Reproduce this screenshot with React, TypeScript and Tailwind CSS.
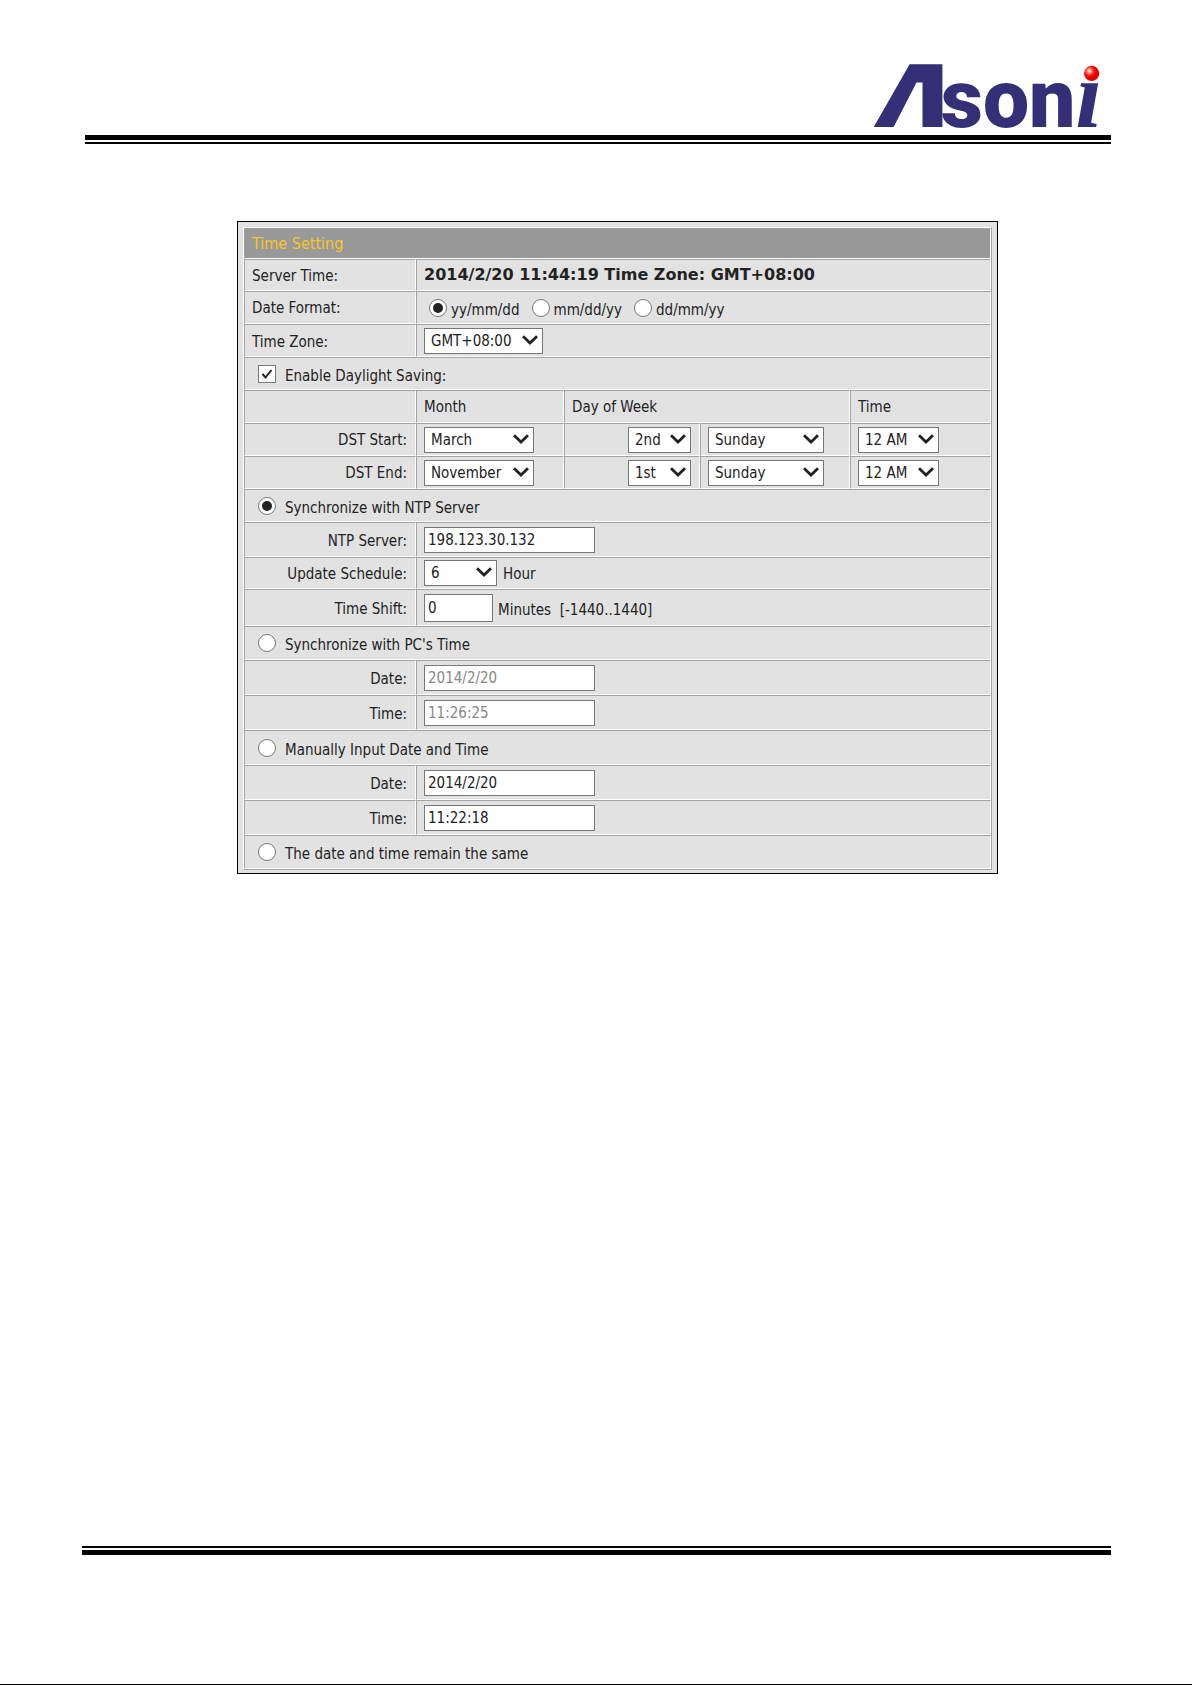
import type { ReactNode } from "react";

// ─── Types ────────────────────────────────────────────────────────────────────

interface SelectBoxProps {
  label: string;
  value: string;
  options: string[];
  className: string;
}

interface TextBoxProps {
  id: string;
  value: string;
  className?: string;
  disabled?: boolean;
}

interface ModeRowProps {
  label: string;
  height: string;
  defaultChecked?: boolean;
}

interface FieldRowProps {
  label: string;
  htmlFor: string;
  height?: string;
  children: ReactNode;
}

// ─── Constants ────────────────────────────────────────────────────────────────

const CELL =
  "border border-t-[#a3a3a3] border-l-[#a3a3a3] border-r-white border-b-white px-[7px] py-0";

const RADIO =
  "grid size-[18px] shrink-0 appearance-none place-content-center rounded-full border border-[#777] bg-white before:size-[10px] before:rounded-full checked:before:bg-[#222]";

const DATE_FORMATS = ["yy/mm/dd", "mm/dd/yy", "dd/mm/yy"];

const DST_ROWS = [
  { label: "DST Start:", month: "March", nth: "2nd" },
  { label: "DST End:", month: "November", nth: "1st" },
];

// ─── Logo ─────────────────────────────────────────────────────────────────────

function Logo() {
  return (
    <svg
      viewBox="40 40 700 196"
      className="h-[65px] w-[233px] overflow-visible"
      role="img"
      aria-label="Asoni"
    >
      <defs>
        <radialGradient id="ball" cx="0.35" cy="0.35" r="0.5">
          <stop offset="0" stopColor="#ffffff" />
          <stop offset="0.4" stopColor="#ff5a4a" />
          <stop offset="0.7" stopColor="#f00a0a" />
          <stop offset="1" stopColor="#e60000" />
        </radialGradient>
      </defs>
      <g fill="#352f78">
        <path d="M41 233 149 44H248V233H188V99H170L101 233Z" />
        <text x="243" y="232" fontFamily="Roboto, sans-serif" fontWeight="900" fontSize="248">
          son
          <tspan
            fontFamily="'Liberation Serif', 'Times New Roman', serif"
            fontStyle="italic"
            fontWeight="700"
            fontSize="290"
          >
            ı
          </tspan>
        </text>
      </g>
      <circle cx="698" cy="71" r="23" fill="url(#ball)" />
    </svg>
  );
}

// ─── Form controls ────────────────────────────────────────────────────────────

function SelectBox({ label, value, options, className }: SelectBoxProps) {
  return (
    <span className="relative inline-block align-middle">
      <select
        aria-label={label}
        defaultValue={value}
        className={`block h-[26px] appearance-none border border-[#777] bg-white pl-[6px] text-[15px] leading-[22px] ${className}`}
      >
        {options.map((option) => (
          <option key={option}>{option}</option>
        ))}
      </select>
      <svg
        viewBox="0 0 16 10"
        className="pointer-events-none absolute top-[7px] right-[5px] h-[10px] w-[16px]"
        aria-hidden="true"
      >
        <path d="M1 1.2 8 8 15 1.2" fill="none" stroke="#222" strokeWidth="2.8" />
      </svg>
    </span>
  );
}

function TextBox({ id, value, className = "h-[26px] w-[171px]", disabled }: TextBoxProps) {
  return (
    <input
      id={id}
      type="text"
      defaultValue={value}
      disabled={disabled}
      className={`block border border-[#777] bg-white px-[3px] text-[15px] disabled:text-[#888] ${className}`}
    />
  );
}

// ─── Table rows ───────────────────────────────────────────────────────────────

function ModeRow({ label, height, defaultChecked }: ModeRowProps) {
  return (
    <tr>
      <td colSpan={5} className={`${CELL} ${height}`}>
        <label className="flex items-center gap-[9px] pl-[6px]">
          <input type="radio" name="mode" defaultChecked={defaultChecked} className={RADIO} />
          <span className="pt-1">{label}</span>
        </label>
      </td>
    </tr>
  );
}

function FieldRow({ label, htmlFor, height = "h-[35px]", children }: FieldRowProps) {
  return (
    <tr>
      <th scope="row" className={`${CELL} ${height} pt-[2px] pr-2 text-right font-normal`}>
        <label htmlFor={htmlFor}>{label}</label>
      </th>
      <td colSpan={4} className={CELL}>
        {children}
      </td>
    </tr>
  );
}

// ─── Time settings ────────────────────────────────────────────────────────────

function TimeSettings() {
  return (
    <table className="w-full table-fixed border-separate border-spacing-0 border border-t-white border-r-[#a3a3a3] border-b-[#a3a3a3] border-l-white text-left">
      <colgroup>
        <col className="w-[172px]" />
        <col className="w-[148px]" />
        <col className="w-[136px]" />
        <col className="w-[150px]" />
        <col />
      </colgroup>
      <tbody>
        <tr>
          <th
            colSpan={5}
            className={`${CELL} h-[31px] bg-[#999] text-[16px] font-normal text-[#f8c62c]`}
          >
            Time Setting
          </th>
        </tr>
        <tr>
          <th scope="row" className={`${CELL} h-[32px] pt-[2px] font-normal`}>
            Server Time:
          </th>
          <td
            colSpan={4}
            className={`${CELL} font-['DejaVu_Sans',Verdana,sans-serif] text-[16px] font-bold`}
          >
            2014/2/20 11:44:19 Time Zone: GMT+08:00
          </td>
        </tr>
        <tr>
          <th scope="row" className={`${CELL} h-[33px] font-normal`}>
            Date Format:
          </th>
          <td colSpan={4} className={CELL}>
            <div className="flex gap-3 pl-[5px]">
              {DATE_FORMATS.map((format, index) => (
                <label key={format} className="flex items-center gap-1">
                  <input
                    type="radio"
                    name="format"
                    defaultChecked={index === 0}
                    className={RADIO}
                  />
                  <span className="pt-1">{format}</span>
                </label>
              ))}
            </div>
          </td>
        </tr>
        <tr>
          <th scope="row" className={`${CELL} h-[33px] pt-[2px] font-normal`}>
            Time Zone:
          </th>
          <td colSpan={4} className={CELL}>
            <SelectBox
              label="Time Zone"
              value="GMT+08:00"
              options={["GMT+08:00", "GMT+09:00"]}
              className="w-[119px]"
            />
          </td>
        </tr>
        <tr>
          <td colSpan={5} className={`${CELL} h-[33px]`}>
            <label className="flex items-center gap-[9px] pl-[6px]">
              <span className="relative">
                <input
                  type="checkbox"
                  defaultChecked
                  className="peer block size-[18px] appearance-none border border-[#777] bg-white"
                />
                <svg
                  viewBox="0 0 18 18"
                  className="pointer-events-none invisible absolute inset-0 size-[18px] peer-checked:visible"
                  aria-hidden="true"
                >
                  <path d="M4.5 9 7.5 12.5 13.5 5" fill="none" stroke="#222" strokeWidth="2" />
                </svg>
              </span>
              <span className="pt-1">Enable Daylight Saving:</span>
            </label>
          </td>
        </tr>
        <tr>
          <td className={`${CELL} h-[33px]`} />
          <th scope="col" className={`${CELL} font-normal`}>
            Month
          </th>
          <th scope="col" colSpan={2} className={`${CELL} font-normal`}>
            Day of Week
          </th>
          <th scope="col" className={`${CELL} font-normal`}>
            Time
          </th>
        </tr>
        {DST_ROWS.map((row) => (
          <tr key={row.label}>
            <th scope="row" className={`${CELL} h-[33px] pr-2 text-right font-normal`}>
              {row.label}
            </th>
            <td className={CELL}>
              <SelectBox
                label={`${row.label} month`}
                value={row.month}
                options={["March", "November"]}
                className="w-[110px]"
              />
            </td>
            <td className={`${CELL} pr-2 text-right`}>
              <SelectBox
                label={`${row.label} week`}
                value={row.nth}
                options={["1st", "2nd", "3rd", "4th"]}
                className="w-[63px]"
              />
            </td>
            <td className={CELL}>
              <SelectBox
                label={`${row.label} day`}
                value="Sunday"
                options={["Sunday", "Monday"]}
                className="w-[116px]"
              />
            </td>
            <td className={CELL}>
              <SelectBox
                label={`${row.label} time`}
                value="12 AM"
                options={["12 AM", "1 AM"]}
                className="w-[81px]"
              />
            </td>
          </tr>
        ))}
        <ModeRow label="Synchronize with NTP Server" height="h-[33px]" defaultChecked />
        <FieldRow label="NTP Server:" htmlFor="ntp">
          <TextBox id="ntp" value="198.123.30.132" />
        </FieldRow>
        <tr>
          <th scope="row" className={`${CELL} h-[32px] pt-[2px] pr-2 text-right font-normal`}>
            Update Schedule:
          </th>
          <td colSpan={4} className={CELL}>
            <div className="flex items-center gap-[6px]">
              <SelectBox
                label="Update Schedule"
                value="6"
                options={["6", "12", "24"]}
                className="w-[73px]"
              />
              <span className="pt-[2px]">Hour</span>
            </div>
          </td>
        </tr>
        <FieldRow label="Time Shift:" htmlFor="shift" height="h-[37px]">
          <div className="flex items-center gap-[5px]">
            <TextBox id="shift" value="0" className="h-[28px] w-[69px]" />
            <span className="pt-1 whitespace-pre">Minutes  [-1440..1440]</span>
          </div>
        </FieldRow>
        <ModeRow label="Synchronize with PC's Time" height="h-[34px]" />
        <FieldRow label="Date:" htmlFor="pc-date">
          <TextBox id="pc-date" value="2014/2/20" disabled />
        </FieldRow>
        <FieldRow label="Time:" htmlFor="pc-time">
          <TextBox id="pc-time" value="11:26:25" disabled />
        </FieldRow>
        <ModeRow label="Manually Input Date and Time" height="h-[35px]" />
        <FieldRow label="Date:" htmlFor="manual-date">
          <TextBox id="manual-date" value="2014/2/20" />
        </FieldRow>
        <FieldRow label="Time:" htmlFor="manual-time">
          <TextBox id="manual-time" value="11:22:18" />
        </FieldRow>
        <ModeRow label="The date and time remain the same" height="h-[34px]" />
      </tbody>
    </table>
  );
}

// ─── Page ─────────────────────────────────────────────────────────────────────

export default function App() {
  return (
    <div className="flex min-h-screen flex-col border-b border-black bg-white pr-[81px] pl-[82px] font-['DejaVu_Sans_Condensed','DejaVu_Sans',Tahoma,sans-serif] text-[15px] leading-[18px] text-[#222]">
      <header className="ml-[3px] pt-[63px]">
        <div className="flex justify-end pr-[5px] pb-[7px]">
          <Logo />
        </div>
        <div className="h-[9px] border-t-5 border-b-2 border-black" />
      </header>
      <main className="pt-[77px] pl-[155px]">
        <form className="max-w-[761px] border border-black bg-[#e2e2e2] p-[5px] pb-[3px]">
          <TimeSettings />
        </form>
      </main>
      <footer className="mt-auto pb-[129px]">
        <div className="h-[9px] border-t-2 border-b-5 border-black" />
      </footer>
    </div>
  );
}
